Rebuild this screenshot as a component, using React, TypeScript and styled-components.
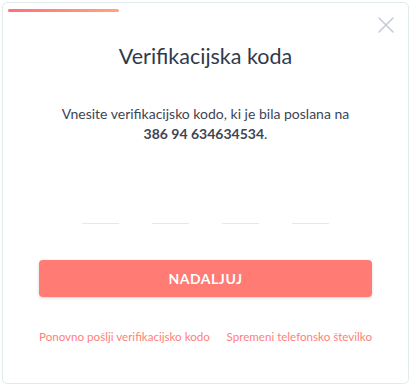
import styled, { createGlobalStyle } from 'styled-components';

const GlobalStyle = createGlobalStyle`
  html, body {
    margin: 0;
    padding: 0;
    background: #fff;
  }
  body {
    font-family: Lato, 'Open Sans', sans-serif;
  }
`;

const Card = styled.div`
  box-sizing: border-box;
  margin: 2px;
  width: 407px;
  height: 382px;
  border: 1px solid #e3eaea;
  border-radius: 5px;
  background: #fff;
  position: relative;
  display: flex;
  flex-direction: column;
  align-items: center;
  padding: 6px 36px 0;
`;

const Progress = styled.div`
  align-self: flex-start;
  margin-left: -31px;
  width: 111px;
  height: 3px;
  border-radius: 2px;
  background: linear-gradient(90deg, #fe6f7b, #ffa679);
`;

const CloseButton = styled.button`
  position: absolute;
  top: 13px;
  right: 13px;
  width: 18px;
  height: 18px;
  padding: 0;
  border: none;
  background: none;
  cursor: pointer;
  display: flex;
  align-items: center;
  justify-content: center;
`;

const Title = styled.h1`
  margin: 29px 0 0;
  font-size: 21.5px;
  font-weight: 400;
  color: #2f3a4c;
  line-height: 30px;
`;

const Message = styled.p`
  margin: 33px 0 0;
  font-size: 14px;
  line-height: 20px;
  color: #3d4554;
  text-align: center;
`;

const Phone = styled.strong`
  font-weight: 700;
`;

const CodeRow = styled.div`
  display: flex;
  gap: 33px;
  margin-top: 59px;
`;

const CodeInput = styled.input`
  width: 37px;
  height: 20px;
  padding: 0;
  border: none;
  border-bottom: 1px solid #e6e8f0;
  outline: none;
  text-align: center;
  font-size: 16px;
  font-family: inherit;
  color: #2f3a4c;
`;

const SubmitButton = styled.button`
  margin-top: 36px;
  width: 333px;
  height: 37px;
  border: none;
  border-radius: 4px;
  background: #ff7b74;
  box-shadow: 0 1px 3px rgba(0, 0, 0, 0.18);
  color: #fff;
  font-family: inherit;
  font-size: 14px;
  font-weight: 700;
  letter-spacing: 0.5px;
  cursor: pointer;
`;

const Links = styled.div`
  display: flex;
  justify-content: space-between;
  width: 333px;
  margin-top: 33px;
  white-space: nowrap;
`;

const LinkButton = styled.a`
  font-size: 11.6px;
  color: #ff7f7a;
  text-decoration: none;
  cursor: pointer;
`;

export default function App() {
  return (
    <>
      <GlobalStyle />
      <Card>
        <Progress />
        <CloseButton aria-label="Zapri">
          <svg width="16" height="16" viewBox="0 0 16 16">
            <path d="M1 1 L15 15 M15 1 L1 15" stroke="#c7ccd6" strokeWidth="1.6" strokeLinecap="round" />
          </svg>
        </CloseButton>
        <Title>Verifikacijska koda</Title>
        <Message>
          Vnesite verifikacijsko kodo, ki je bila poslana na
          <br />
          <Phone>386 94 634634534</Phone>.
        </Message>
        <CodeRow>
          {[0, 1, 2, 3].map((i) => (
            <CodeInput key={i} maxLength={1} inputMode="numeric" />
          ))}
        </CodeRow>
        <SubmitButton>NADALJUJ</SubmitButton>
        <Links>
          <LinkButton>Ponovno pošlji verifikacijsko kodo</LinkButton>
          <LinkButton>Spremeni telefonsko številko</LinkButton>
        </Links>
      </Card>
    </>
  );
}
